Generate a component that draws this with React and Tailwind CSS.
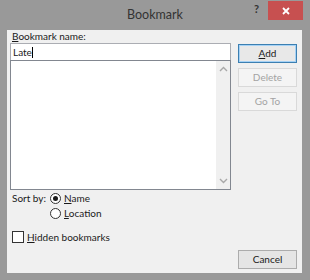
import React from "react"

const font = { fontFamily: 'Lato, "Noto Sans", sans-serif' }

const Btn = ({ children, disabled, primary }) => (
  <div
    className={
      "h-[19px] w-full flex items-center justify-center text-[10px] border " +
      (disabled
        ? "border-[#d9d9d9] bg-[#f4f4f4] text-[#a3a3a3]"
        : primary
        ? "border-[#3c7fb1] bg-[#e8e8e8] text-[#1a1a1a] shadow-[inset_0_0_0_1px_#a6d2f5]"
        : "border-[#acacac] bg-[#e5e5e5] text-[#1a1a1a]")
    }
  >
    {children}
  </div>
)

const Chevron = ({ up }) => (
  <svg width="9" height="6" viewBox="0 0 9 6">
    <path
      d={up ? "M1 5 L4.5 1.5 L8 5" : "M1 1 L4.5 4.5 L8 1"}
      fill="none"
      stroke="#a8a8a8"
      strokeWidth="1.4"
    />
  </svg>
)

export default function App() {
  return (
    <div className="w-[310px] h-[280px] bg-[#999999] flex flex-col" style={font}>
      <div className="h-[30px] flex items-start relative">
        <div className="flex-1 text-center text-[12.5px] text-[#333] pt-[6px]">Bookmark</div>
        <div className="absolute left-[254px] top-[1px] text-[11px] font-bold text-[#333]">?</div>
        <div className="absolute left-[268px] top-[1px] w-[35px] h-[19px] bg-[#c75050] flex items-center justify-center">
          <svg width="8" height="8" viewBox="0 0 8 8">
            <path d="M1 1 L7 7 M7 1 L1 7" stroke="white" strokeWidth="1.8" />
          </svg>
        </div>
      </div>
      <div className="flex-1 ml-[7px] mr-[8px] mb-[7px] bg-[#f0f0f0] flex pl-[3px] pr-[5px] text-[10px] text-[#1a1a1a]">
        <div className="w-[221px] flex flex-col">
          <div className="h-[13px] pl-[2px] leading-[13px] mt-[0px]">
            <span className="underline">B</span>ookmark name:
          </div>
          <div className="h-[18px] bg-white border border-[#abadb3] flex items-center pl-[2px] leading-none">
            Late<span className="inline-block w-[1px] h-[11px] bg-black" />
          </div>
          <div className="h-[130px] -mt-[1px] bg-white border border-[#828790] flex">
            <div className="flex-1" />
            <div className="w-[14px] bg-[#f0f0f0] flex flex-col items-center justify-between py-[5px]">
              <Chevron up />
              <Chevron />
            </div>
          </div>
          <div className="flex mt-[1px] pl-[2px]">
            <div className="w-[38px] shrink-0 leading-[15px] whitespace-nowrap">Sort by:</div>
            <div className="flex flex-col gap-[0px]">
              <div className="flex items-center h-[15px] gap-[3px]">
                <div className="w-[11px] h-[11px] rounded-full border border-[#333] bg-white flex items-center justify-center">
                  <div className="w-[5px] h-[5px] rounded-full bg-[#1a1a1a]" />
                </div>
                <span>
                  <span className="underline">N</span>ame
                </span>
              </div>
              <div className="flex items-center h-[15px] gap-[3px]">
                <div className="w-[11px] h-[11px] rounded-full border border-[#333] bg-white" />
                <span>
                  <span className="underline">L</span>ocation
                </span>
              </div>
            </div>
          </div>
          <div className="flex items-center mt-[9px] pl-[2px] gap-[3px] h-[14px]">
            <div className="w-[12px] h-[12px] border border-[#333] bg-white" />
            <span>
              <span className="underline">H</span>idden bookmarks
            </span>
          </div>
        </div>
        <div className="w-[59px] ml-[7px] flex flex-col pt-[14px]">
          <Btn primary>
            <span>
              <span className="underline">A</span>dd
            </span>
          </Btn>
          <div className="mt-[5px]">
            <Btn disabled>Delete</Btn>
          </div>
          <div className="mt-[5px]">
            <Btn disabled>Go To</Btn>
          </div>
          <div className="mt-auto mb-[4px]">
            <Btn>Cancel</Btn>
          </div>
        </div>
      </div>
    </div>
  )
}
